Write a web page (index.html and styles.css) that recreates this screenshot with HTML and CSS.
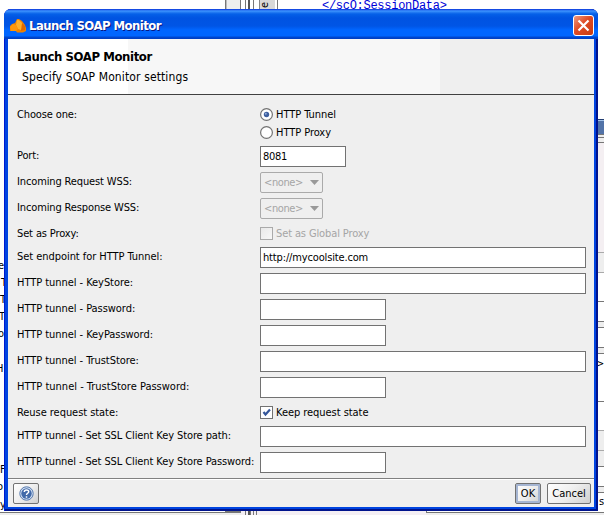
FILE: index.html
```html
<!DOCTYPE html>
<html lang="en">
<head>
<meta charset="utf-8">
<title>Launch SOAP Monitor</title>
<link rel="stylesheet" href="styles.css">
</head>
<body>
<svg class="desktop" width="604" height="515" shape-rendering="crispEdges" aria-hidden="true">
  <rect x="225" width="16" height="515" fill="#eee"/>
  <path d="M225.5 0V9M240.5 0V9M245.5 0V9M253.5 0V9M277.5 0V9" stroke="#777"/>
  <path d="M226.5 0V9" stroke="#bbb"/>
  <rect x="248" width="2" height="9" fill="#555"/>
  <rect x="259" width="16" height="9" fill="#d8d8d8"/>
  <path d="M259.5 0V9" stroke="#888"/>
  <rect x="0" y="513" width="241" height="2" fill="#eee"/>
  <path d="M0 512.5H241M426 512.5H604" stroke="#777"/>
  <rect x="225" y="511" width="16" height="2" fill="#777"/>
  <rect x="241" y="511" width="185" height="4" fill="#f4eff4"/>
  <rect x="426" y="513" width="178" height="2" fill="#eee"/>
  <path d="M245.5 511V515M250.5 511V515M253.5 511V515M256.5 511V515M426.5 511V513" stroke="#777"/>
  <rect x="248" y="511" width="2" height="4" fill="#555"/>
  <rect x="598" y="119" width="6" height="392" fill="#eee"/>
  <rect x="598" y="119" width="6" height="16" fill="#5273a8"/>
  <rect x="598" y="119" width="6" height="1" fill="#223e72"/>
  <rect x="598" y="120" width="6" height="1" fill="#9fc0e8"/>
  <path d="M598 134.500H604M598 137.500H604M598 142.500H604" stroke="#777"/>
  <rect x="598" y="143" width="6" height="109" fill="#f4eff2"/>
  <rect x="598" y="273" width="6" height="29" fill="#fff"/>
  <rect x="598" y="302" width="6" height="19" fill="#fff"/>
  <rect x="598" y="328" width="6" height="19" fill="#fff"/>
  <rect x="598" y="354" width="6" height="76" fill="#fff"/>
  <rect x="598" y="467" width="6" height="19" fill="#fff"/>
  <rect x="598" y="493" width="6" height="19" fill="#fff"/>
  <path d="M598 252.500H604M598 272.500H604M598 430.500H604M598 450.500H604" stroke="#aaa"/>
  <path d="M598 301.500H604M598 321.500H604M598 327.500H604M598 347.500H604M598 353.500H604M598 401.500H604M598 466.500H604M598 486.500H604M598 492.500H604" stroke="#777"/>
</svg>
<span class="behind code">&lt;/scO:SessionData&gt;</span>
<span class="behind tab">e</span>
<div class="behind strip left-strip">
  <span class="s1">e</span><span class="s2">T</span><span class="s3">T</span><span class="s4">T</span><span class="s5">o</span><span class="s6">H</span><span class="s7">F</span><span class="s8">o</span><span class="s9">y</span>
</div>
<div class="behind strip right-strip"><span class="r1">&gt;</span><span class="r2">s</span></div>

<div class="dialog">
  <div class="titlebar">
    <svg class="app-icon" width="18" height="18" viewBox="0 0 18 18">
      <path d="M1 15V10L3 8L6 7L8 3H10L13 5L16 9L17 12V15L14 16.500H8L7 15Z" fill="#f08300"/>
      <path d="M8 4H10L13 7L14 10L12 14L9 13L7 9Z" fill="#ffb02a"/>
      <path d="M1 11L4 8L7 9L9 13L7 15H2Z" fill="#ff970b"/>
      <path d="M13 7L16 10V14L12 15Z" fill="#e06a00"/>
    </svg>
    <span class="title">Launch SOAP Monitor</span>
    <button class="close" aria-label="Close">
      <svg width="13" height="13" viewBox="0 0 13 13"><path d="M1.500 1.500L11.500 11.500M11.500 1.500L1.500 11.500" stroke="#fff" stroke-width="2.200"/></svg>
    </button>
  </div>
  <div class="body">
    <header class="header">
      <h1>Launch SOAP Monitor</h1>
      <p>Specify SOAP Monitor settings</p>
    </header>
    <main class="form">
      <span class="label top">Choose one:</span>
      <div class="radios">
        <label class="option"><svg width="13" height="13"><circle cx="6.500" cy="6.500" r="5.900" fill="#fff" stroke="#727272" stroke-width="1.200"/><circle cx="6.500" cy="6.500" r="2.700" fill="#3e5f9f"/><circle cx="5.800" cy="5.700" r="1" fill="#8facd8"/></svg><span>HTTP Tunnel</span></label>
        <label class="option"><svg width="13" height="13"><circle cx="6.500" cy="6.500" r="5.900" fill="#fff" stroke="#727272" stroke-width="1.200"/></svg><span>HTTP Proxy</span></label>
      </div>
      <span class="label">Port:</span><div class="field port">8081</div>
      <span class="label">Incoming Request WSS:</span>
      <div class="combo"><span>&lt;none&gt;</span><svg width="9" height="5"><path d="M0 0H9L4.500 5Z" fill="#999"/></svg></div>
      <span class="label">Incoming Response WSS:</span>
      <div class="combo"><span>&lt;none&gt;</span><svg width="9" height="5"><path d="M0 0H9L4.500 5Z" fill="#999"/></svg></div>
      <span class="label short">Set as Proxy:</span>
      <label class="option disabled"><i class="box"></i><span>Set as Global Proxy</span></label>
      <span class="label loose">Set endpoint for HTTP Tunnel:</span><div class="field wide">http://mycoolsite.com</div>
      <span class="label loose">HTTP tunnel - KeyStore:</span><div class="field wide"></div>
      <span class="label loose">HTTP tunnel - Password:</span><div class="field"></div>
      <span class="label loose">HTTP tunnel - KeyPassword:</span><div class="field"></div>
      <span class="label loose">HTTP tunnel - TrustStore:</span><div class="field wide"></div>
      <span class="label looser">HTTP tunnel - TrustStore Password:</span><div class="field"></div>
      <span class="label short loose">Reuse request state:</span>
      <label class="option"><i class="box"><svg width="11" height="11"><path d="M2.500 5L4.500 7.500L9 2.500" fill="none" stroke="#34569a" stroke-width="2.200"/></svg></i><span class="loose">Keep request state</span></label>
      <span class="label long">HTTP tunnel - Set SSL Client Key Store path:</span><div class="field wide"></div>
      <span class="label long">HTTP tunnel - Set SSL Client Key Store Password:</span><div class="field"></div>
    </main>
    <footer class="footer">
      <button class="btn help" aria-label="Help">
        <svg width="15" height="15" viewBox="0 0 15 15"><circle cx="7.500" cy="7.500" r="6.700" fill="#d5e2f4" stroke="#5578ad" stroke-width="1"/><circle cx="7.500" cy="7.500" r="5.200" fill="#426aa9"/><path d="M5.300 6C5.300 3.200 9.700 3.300 9.700 5.700C9.700 7.300 7.500 7.200 7.500 9M7.500 10.200V11.700" fill="none" stroke="#fff" stroke-width="1.500"/></svg>
      </button>
      <button class="btn ok">OK</button>
      <button class="btn cancel">Cancel</button>
    </footer>
  </div>
</div>
</body>
</html>
```
FILE: styles.css
```css
* { box-sizing: border-box; }
body {
  margin: 0;
  width: 604px;
  height: 515px;
  overflow: hidden;
  position: relative;
  background: #fff;
  color: #000;
  font: 11px/14px "DejaVu Sans Condensed", "DejaVu Sans", sans-serif;
  font-stretch: condensed;
}
svg { display: block; flex: none; }
.desktop { position: absolute; left: 0; top: 0; }
.behind { position: absolute; }
.code {
  left: 322px;
  top: -1px;
  color: #0000d8;
  font: 12px/14px "Liberation Mono", monospace;
  letter-spacing: -0.28px;
}
.tab { left: 262px; top: -2px; transform: rotate(-90deg); }
.strip { top: 0; height: 515px; overflow: hidden; }
.left-strip { left: 0; width: 5px; }
.right-strip { left: 598px; width: 6px; }
.strip span { position: absolute; left: -2px; }
.s1 { top: 259px; }
.strip .s2 { top: 276px; left: 1px; }
.strip .s3 { top: 293px; left: 0; }
.strip .s4 { top: 310px; left: -1px; }
.s5 { top: 327px; }
.strip .s6 { top: 362px; left: -4px; }
.strip .s7 { top: 463px; left: 0; }
.strip .s8 { top: 480px; left: -3px; }
.strip .s9 { top: 498px; left: 0; }
.r1 { top: 357px; }
.strip .r2 { top: 495px; left: 1px; }

.dialog {
  position: absolute;
  left: 4px;
  top: 9px;
  width: 594px;
  height: 502px;
  display: flex;
  flex-direction: column;
  padding: 0 4px 4px;
  border-radius: 7px 7px 0 0;
  background: #0044e0;
  box-shadow: inset 1px 0 #0019cf, inset -2px 0 #00138c, inset 0 -2px #00138c;
}
.titlebar {
  height: 30px;
  flex: none;
  display: flex;
  align-items: center;
  margin: 0 -4px;
  padding: 2px 4px 0 5px;
  border-radius: 7px 7px 0 0;
  background: linear-gradient(#0831d9 0, #3d95ff 2px, #2a80f5 3px, #0560e8 5px, #0053e1 9px, #0055e5 17px, #0066ff 21px, #0066ff 27px, #0048d0 28px, #003dc0 30px);
}
.title {
  margin: 2px 0 0 2px;
  color: #fff;
  font-size: 13px;
  font-weight: bold;
  white-space: nowrap;
  letter-spacing: -0.55px;
  text-shadow: 1px 1px #0a1883;
}
.close {
  width: 21px;
  height: 21px;
  margin: 1px 0 0 auto;
  padding: 0;
  display: grid;
  place-items: center;
  border: 1px solid #fff;
  border-radius: 3px;
  background: linear-gradient(135deg, #ee9a80, #df4b25 45%, #c93c10);
}
.body {
  flex: 1;
  display: flex;
  flex-direction: column;
  background: #efefef;
}
.header {
  height: 56px;
  flex: none;
  border-bottom: 1px solid #404040;
  padding: 11px 0 0 9px;
  background: linear-gradient(90deg, #fff 120px, #f7f7f7 120px, #f7f7f7 432px, #efefef 432px);
}
h1 { margin: 0; font-size: 13px; line-height: 14px; letter-spacing: -0.4px; }
.header p { margin: 6px 0 0 5px; font-size: 12px; line-height: 14px; letter-spacing: 0.12px; }
.form {
  display: grid;
  grid-template-columns: 243px 326px;
  row-gap: 5px;
  padding: 10px 0 0 9px;
  align-items: center;
  grid-template-rows: 36px 21px 21px 21px 18px repeat(6, 21px) 18px 21px 21px;
}
.label { white-space: nowrap; letter-spacing: -0.13px; padding-bottom: 2px; }
.label.top { align-self: start; line-height: 20px; padding: 0; }
.label.short { padding: 2px 0 0; }
.loose { letter-spacing: -0.05px; }
.label.looser { letter-spacing: 0; }
.label.long { letter-spacing: -0.1px; }
.radios { display: flex; flex-direction: column; }
.option { height: 18px; display: flex; align-items: center; gap: 3px; letter-spacing: -0.05px; }
.option span { padding-top: 2px; }
.disabled { color: #a5a5a5; letter-spacing: -0.12px; }
.box { width: 13px; height: 13px; border: 1px solid #727272; background: #fff; }
.disabled .box { border-color: #aaa; background: linear-gradient(135deg, #e9e9e9, #f7f7f7); }
.field {
  width: 126px;
  height: 21px;
  padding: 0 2px;
  border: 1px solid #727272;
  background: #fff;
  line-height: 19px;
  letter-spacing: -0.15px;
}
.port { width: 86px; letter-spacing: -0.3px; }
.wide { width: 326px; }
.combo {
  width: 63px;
  height: 21px;
  padding: 0 3px;
  display: flex;
  align-items: center;
  justify-content: space-between;
  border: 1px solid #aaa;
  border-radius: 2px;
  color: #a5a5a5;
  letter-spacing: -0.4px;
}
.footer {
  margin-top: auto;
  height: 29px;
  flex: none;
  display: flex;
  gap: 6px;
  padding: 4px 3px 0 5px;
  border-top: 1px solid #808080;
  box-shadow: inset 0 1px #fff;
}
.btn {
  height: 21px;
  padding: 0;
  display: grid;
  place-items: center;
  border: 1px solid #727272;
  border-radius: 2px;
  background: linear-gradient(135deg, #fff, #eee 50%, #cfcfcf);
  color: #000;
  font: inherit;
}
.help { width: 26px; margin-right: auto; }
.ok { width: 26px; box-shadow: inset 0 0 0 2px #a5b5d2; }
.cancel { width: 44px; }
```
